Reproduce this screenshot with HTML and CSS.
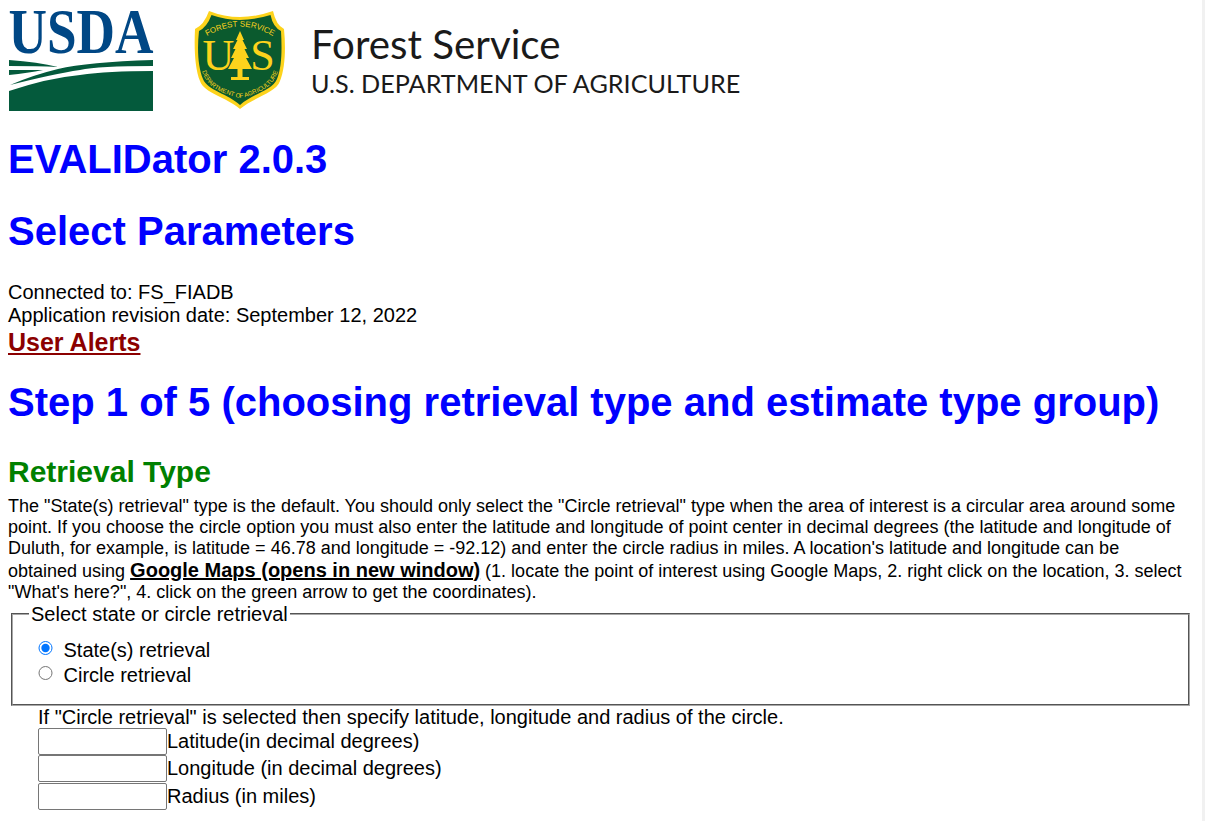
FILE: index.html
```html
<!DOCTYPE html>
<html lang="en">
<head>
<meta charset="utf-8">
<title>EVALIDator</title>
<link rel="stylesheet" href="styles.css">
</head>
<body>
<header class="brand">
  <svg class="usda" width="150" height="112" viewBox="0 0 150 112" role="img" aria-label="USDA">
    <text transform="translate(0.500 53) scale(0.845 1)" class="usda-text">USDA</text>
    <path d="M1 60Q30 62 50 67Q30 66 1 66Z" fill="#045a3c"/>
    <path d="M1 70L35 70Q20 73 1 75Z" fill="#045a3c"/>
    <path d="M2 85Q25 75 50 69Q80 62 145 60V66Q90 66 72 70Q45 74 2 85Z" fill="#045a3c"/>
    <path d="M1 91Q40 78 72 75Q100 71 145 71V111H1Z" fill="#045a3c"/>
  </svg>
  <svg class="shield" width="92" height="101" viewBox="0 0 92 101" role="img" aria-label="Forest Service shield">
    <path d="M1 20Q10 16 15 2Q30 8 46 8Q62 8 79 2Q82 16 90 20C92 40 91 60 86 72C82 84 60 88 46 100C32 88 10 84 6 72C1 60 0 40 1 20Z" fill="#fdd31c"/>
    <path d="M5 22Q13 18 17.500 6Q32 11 46 11Q60 11 76.500 6Q79 18 87 22C88 40 88 58 83 70C79 81 58 85 46 96C34 85 13 81 9 70C4 58 3 40 5 22Z" fill="#0b5a2e"/>
    <defs>
      <path id="arcTop" d="M10 29Q46 6 82 29"/>
      <path id="arcBottom" d="M8 62Q13 78 30 84Q40 88 46 89Q54 88 62 84Q79 78 84 62"/>
    </defs>
    <text class="arc"><textPath href="#arcTop" startOffset="50%" text-anchor="middle">FOREST SERVICE</textPath></text>
    <text class="arc arc-low"><textPath href="#arcBottom" startOffset="50%" text-anchor="middle">DEPARTMENT OF AGRICULTURE</textPath></text>
    <text x="24.500" y="61" class="us-letter">U</text>
    <text x="68.500" y="61" class="us-letter">S</text>
    <path d="M46 22L50 31H48.500L53 40H50.500L55 49H52L58 60H48.500V68H55V71H37V68H43.500V60H34L40 49H37L41.500 40H39L43.500 31H42Z" fill="#fdd31c"/>
  </svg>
  <div class="agency">
    <div class="agency-name">Forest Service</div>
    <div class="agency-dept">U.S. DEPARTMENT OF AGRICULTURE</div>
  </div>
</header>
<h1 class="title">EVALIDator 2.0.3</h1>
<h1 class="title second">Select Parameters</h1>
<div class="meta">
  <div>Connected to: FS_FIADB</div>
  <div>Application revision date: September 12, 2022</div>
  <a class="alerts" href="#">User Alerts</a>
</div>
<h1 class="title step">Step 1 of 5 (choosing retrieval type and estimate type group)</h1>
<h2 class="section">Retrieval Type</h2>
<p class="intro">The "State(s) retrieval" type is the default. You should only select the "Circle retrieval" type when the area of interest is a circular area around some point. If you choose the circle option you must also enter the latitude and longitude of point center in decimal degrees (the latitude and longitude of Duluth, for example, is latitude = 46.78 and longitude = -92.12) and enter the circle radius in miles. A location's latitude and longitude can be obtained using <a class="maps" href="#">Google Maps (opens in new window)</a> (1. locate the point of interest using Google Maps, 2. right click on the location, 3. select "What's here?", 4. click on the green arrow to get the coordinates).</p>
<fieldset class="retrieval">
  <legend>Select state or circle retrieval</legend>
  <label class="choice"><input type="radio" name="rtype" checked>State(s) retrieval</label>
  <label class="choice"><input type="radio" name="rtype">Circle retrieval</label>
</fieldset>
<div class="circle">
  <div class="circle-note">If "Circle retrieval" is selected then specify latitude, longitude and radius of the circle.</div>
  <label class="coord"><input type="text">Latitude(in decimal degrees)</label>
  <label class="coord"><input type="text">Longitude (in decimal degrees)</label>
  <label class="coord"><input type="text">Radius (in miles)</label>
</div>
</body>
</html>
```
FILE: styles.css
```css
html {
  height: 100%;
  overflow: hidden;
  background: #fff;
}
body {
  margin: 0;
  padding: 0 15px 0 8px;
  font-family: "Liberation Sans", Arial, sans-serif;
  font-size: 20px;
  color: #000;
  height: 821px;
  overflow: hidden;
  box-sizing: border-box;
  border-right: 3px solid #f1f1f1;
}
.brand {
  display: flex;
  align-items: flex-start;
  height: 112px;
}
.usda { flex: none; }
.usda-text {
  font-family: "Liberation Serif", serif;
  font-weight: bold;
  font-size: 63px;
  fill: #004785;
}
.shield { margin: 9px 0 0 36px; flex: none; }
.arc {
  font-family: "Liberation Sans", sans-serif;
  font-size: 8px;
  fill: #fdd31c;
}
.arc-low { font-size: 6.200px; }
.us-letter {
  font-family: "Liberation Serif", serif;
  font-size: 44px;
  fill: #fdd31c;
  text-anchor: middle;
}
.agency { margin: 21px 0 0 25px; color: #1a1a1a; font-family: Lato, sans-serif; }
.agency-name { font-size: 40.300px; line-height: 46px; }
.agency-dept { font-size: 25.200px; line-height: 32px; }
.title {
  margin: 0;
  font-size: 40px;
  line-height: 46px;
  color: #0000ff;
  font-weight: bold;
  padding-top: 24px;
}
.second { padding-top: 26px; }
.meta { margin-top: 27px; line-height: 23px; }
.alerts {
  display: block;
  color: #8b0000;
  font-size: 25px;
  font-weight: bold;
  line-height: 30px;
}
.step { padding-top: 22px; }
.section {
  margin: 30px 0 0;
  font-size: 30px;
  line-height: 34px;
  color: #008000;
  font-weight: bold;
}
.intro {
  margin: 6.500px 0 0;
  font-size: 18px;
  line-height: 21px;
  width: 1182px;
}
.maps { color: #000; font-size: 20px; line-height: 23px; font-weight: bold; }
.retrieval {
  margin: 0 0 0 3px;
  padding: 12px 0 18px 22px;
  width: 1179px;
  box-sizing: border-box;
  border: 2px groove #a8a8a8;
  height: 103px;
}
.retrieval legend { padding: 0 2px; margin-left: -6px; line-height: 23px; }
.choice { display: flex; align-items: center; height: 25px; }
.choice input { margin: 0 11px 4px 3px; width: 14.500px; height: 14.500px; flex: none; }
.circle { margin-left: 30px; line-height: 23px; }
.circle-note { line-height: 22px; }
.coord { display: flex; align-items: center; height: 27.500px; }
.coord input {
  width: 129px;
  height: 27px;
  box-sizing: border-box;
  margin: 0;
  padding: 1px 2px;
  border: 1px solid #767676;
  border-radius: 2px;
  background: #fff;
  flex: none;
}
```
